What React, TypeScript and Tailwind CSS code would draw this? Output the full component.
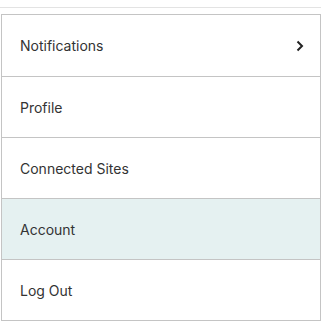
import React from 'react';

const items = ['Notifications', 'Profile', 'Connected Sites', 'Account', 'Log Out'];

export default function App() {
  return (
    <div className="w-[321px] h-[321px] bg-white overflow-hidden" style={{ fontFamily: 'Inter, "Liberation Sans", sans-serif' }}>
      <div className="h-[7px]" />
      <div className="h-px bg-[#e3e3e3]" />
      <div className="h-[6px]" />
      <div className="ml-px w-[320px] border border-[#c4c4c4]">
        {items.map((label, i) => (
          <div
            key={label}
            className={`h-[61px] flex items-center justify-between pl-[18px] pr-[16px] text-[14px] text-[#333] ${
              i > 0 ? 'border-t border-[#c4c4c4]' : ''
            } ${label === 'Account' ? 'bg-[#e5f1f1]' : ''}`}
          >
            <span>{label}</span>
            {i === 0 && (
              <svg width="8" height="12" viewBox="0 0 8 12" fill="none">
                <path d="M1.5 1.5L6 6L1.5 10.5" stroke="#222" strokeWidth="2" />
              </svg>
            )}
          </div>
        ))}
      </div>
    </div>
  );
}
